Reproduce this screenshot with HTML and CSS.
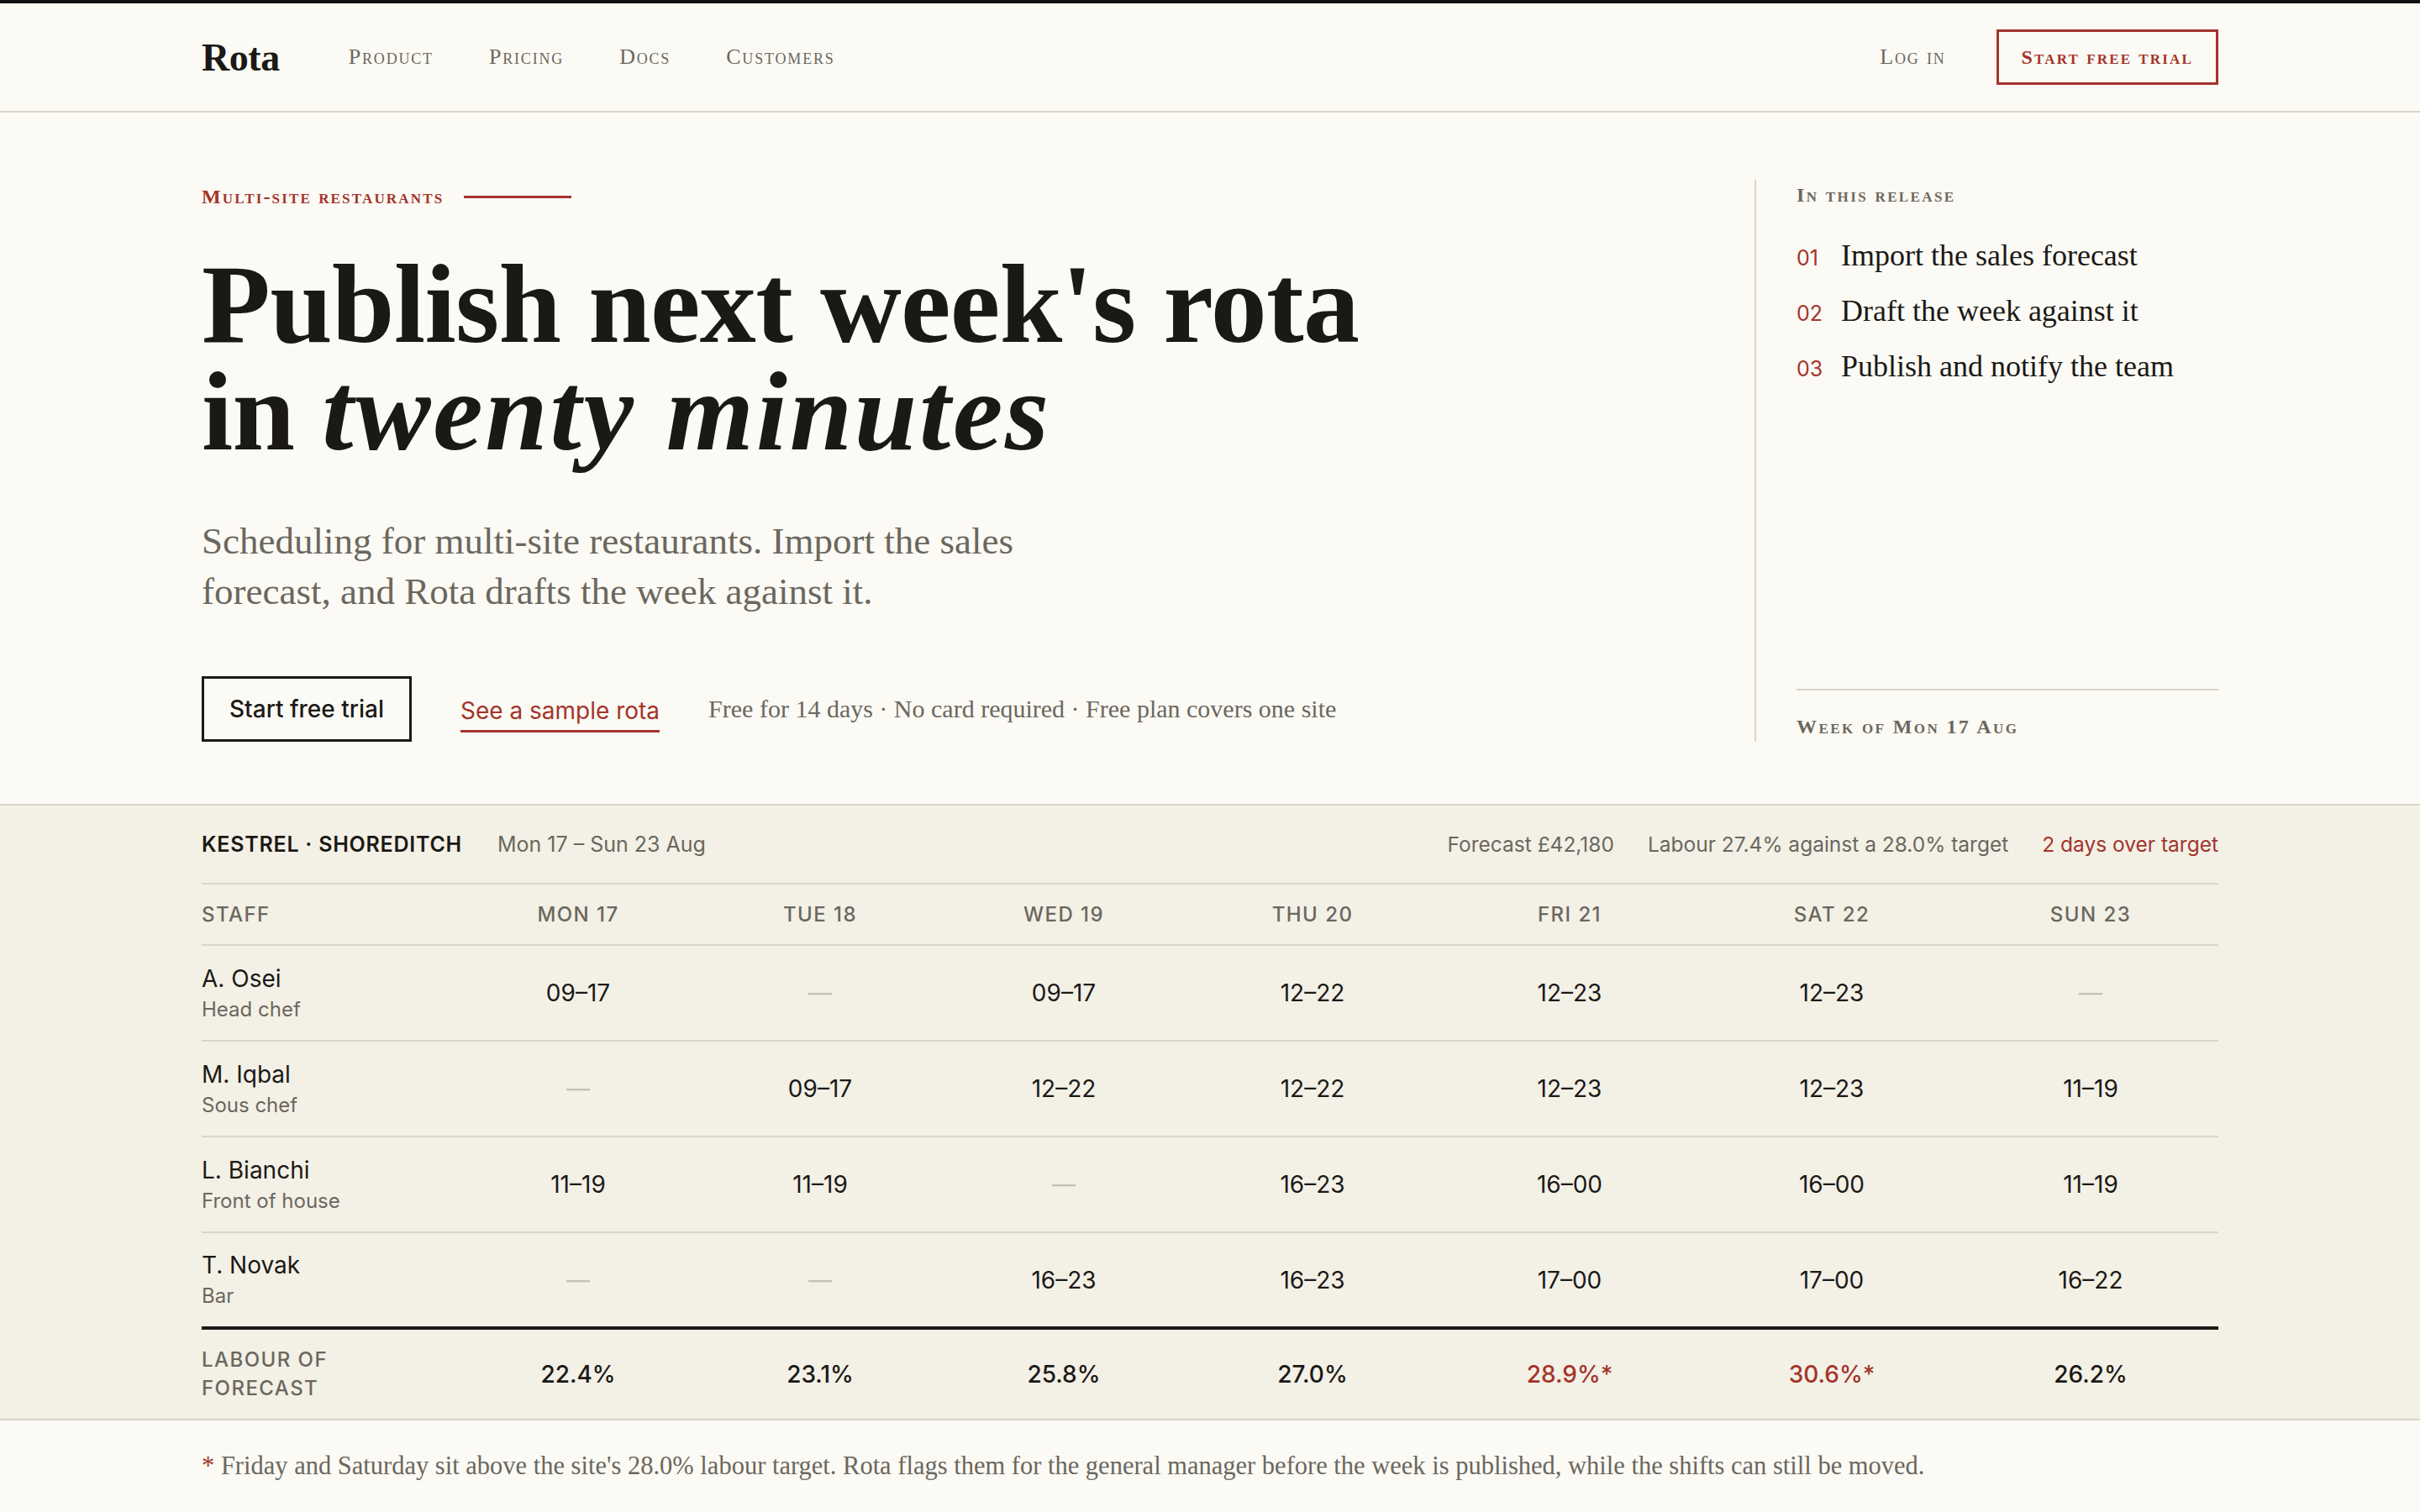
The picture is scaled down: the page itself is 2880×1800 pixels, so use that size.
FILE: index.html
```html
<!DOCTYPE html>
<html lang="en">
<head>
<meta charset="utf-8">
<title>Rota — Publish next week's rota in twenty minutes</title>
<link rel="stylesheet" href="styles.css">
</head>
<body>
<header class="nav">
  <div class="wrap nav-inner">
    <div class="nav-left">
      <a class="logo" href="#">Rota</a>
      <nav class="nav-links">
        <a href="#">Product</a>
        <a href="#">Pricing</a>
        <a href="#">Docs</a>
        <a href="#">Customers</a>
      </nav>
    </div>
    <div class="nav-right">
      <a class="login" href="#">Log in</a>
      <a class="nav-cta" href="#">Start free trial</a>
    </div>
  </div>
</header>

<section class="hero">
  <div class="wrap hero-grid">
    <div class="hero-main">
      <div class="eyebrow"><span>Multi-site restaurants</span><span class="eyebrow-rule"></span></div>
      <h1 class="headline"><span class="line">Publish next week's rota</span><span class="line">in <em>twenty minutes</em></span></h1>
      <p class="lede">Scheduling for multi-site restaurants. Import the sales forecast, and Rota drafts the week against it.</p>
      <div class="actions">
        <a class="btn" href="#">Start free trial</a>
        <a class="text-link" href="#">See a sample rota</a>
        <span class="meta">Free for 14 days · No card required · Free plan covers one site</span>
      </div>
    </div>
    <aside class="release">
      <div class="release-top">
        <div class="label">In this release</div>
        <ol class="steps">
          <li><span class="num">01</span><span>Import the sales forecast</span></li>
          <li><span class="num">02</span><span>Draft the week against it</span></li>
          <li><span class="num">03</span><span>Publish and notify the team</span></li>
        </ol>
      </div>
      <div class="release-foot label">Week of Mon 17 Aug</div>
    </aside>
  </div>
</section>

<section class="rota">
  <div class="wrap">
    <div class="rota-head">
      <div class="site">
        <span class="site-name">KESTREL · SHOREDITCH</span>
        <span class="muted">Mon 17 – Sun 23 Aug</span>
      </div>
      <div class="stats">
        <span class="muted">Forecast £42,180</span>
        <span class="muted">Labour 27.4% against a 28.0% target</span>
        <span class="alert">2 days over target</span>
      </div>
    </div>
    <table class="rota-table">
      <colgroup>
        <col class="c-staff"><col class="c-mon"><col class="c-tue"><col class="c-wed"><col class="c-thu"><col class="c-fri"><col class="c-sat"><col class="c-sun">
      </colgroup>
      <thead>
        <tr><th class="staff">Staff</th><th>Mon 17</th><th>Tue 18</th><th>Wed 19</th><th>Thu 20</th><th>Fri 21</th><th>Sat 22</th><th>Sun 23</th></tr>
      </thead>
      <tbody>
        <tr>
          <td class="staff"><div class="name">A. Osei</div><div class="role">Head chef</div></td>
          <td>09–17</td><td class="off">—</td><td>09–17</td><td>12–22</td><td>12–23</td><td>12–23</td><td class="off">—</td>
        </tr>
        <tr>
          <td class="staff"><div class="name">M. Iqbal</div><div class="role">Sous chef</div></td>
          <td class="off">—</td><td>09–17</td><td>12–22</td><td>12–22</td><td>12–23</td><td>12–23</td><td>11–19</td>
        </tr>
        <tr>
          <td class="staff"><div class="name">L. Bianchi</div><div class="role">Front of house</div></td>
          <td>11–19</td><td>11–19</td><td class="off">—</td><td>16–23</td><td>16–00</td><td>16–00</td><td>11–19</td>
        </tr>
        <tr>
          <td class="staff"><div class="name">T. Novak</div><div class="role">Bar</div></td>
          <td class="off">—</td><td class="off">—</td><td>16–23</td><td>16–23</td><td>17–00</td><td>17–00</td><td>16–22</td>
        </tr>
      </tbody>
      <tfoot>
        <tr>
          <th class="staff">Labour of<br>forecast</th>
          <td>22.4%</td><td>23.1%</td><td>25.8%</td><td>27.0%</td><td class="over">28.9%*</td><td class="over">30.6%*</td><td>26.2%</td>
        </tr>
      </tfoot>
    </table>
  </div>
</section>

<p class="wrap footnote"><span class="star">*</span> Friday and Saturday sit above the site's 28.0% labour target. Rota flags them for the general manager before the week is published, while the shifts can still be moved.</p>
</body>
</html>
```
FILE: styles.css
```css
:root {
  --bg: #fbfaf4;
  --panel: #f3f0e6;
  --line: #d9d5c9;
  --ink: #1b1916;
  --muted: #6b675e;
  --red: #a3342b;
  --dash: #c4c0b4;
  --serif: "Liberation Serif", "Times New Roman", serif;
  --sans: Inter, "Liberation Sans", Arial, sans-serif;
}

* { box-sizing: border-box; }

html, body {
  margin: 0;
  padding: 0;
}

body {
  background: var(--bg);
  color: var(--ink);
  font-family: var(--serif);
  border-top: 4px solid #111;
}

a { color: inherit; text-decoration: none; }

.wrap {
  width: 2400px;
  margin-left: auto;
  margin-right: auto;
}

/* NAV */
.nav {
  border-bottom: 2px solid var(--line);
}

.nav-inner {
  height: 128px;
  display: flex;
  align-items: center;
  justify-content: space-between;
}

.nav-left {
  display: flex;
  align-items: center;
  gap: 82px;
}

.logo {
  font-family: var(--serif);
  font-weight: 700;
  font-size: 46px;
  letter-spacing: -0.01em;
  color: var(--ink);
}

.nav-links {
  display: flex;
  gap: 66px;
}

.nav-links a,
.login {
  font-family: var(--serif);
  font-variant: small-caps;
  font-size: 26px;
  letter-spacing: 0.07em;
  color: var(--muted);
}

.nav-right {
  display: flex;
  align-items: center;
  gap: 60px;
}

.nav-cta {
  display: flex;
  align-items: center;
  height: 66px;
  padding: 0 27px;
  border: 3px solid var(--red);
  color: var(--red);
  font-family: var(--serif);
  font-variant: small-caps;
  font-weight: 700;
  font-size: 24px;
  letter-spacing: 0.09em;
}

/* HERO */
.hero {
  padding: 80px 0 74px;
  border-bottom: 2px solid var(--line);
}

.hero-grid {
  display: grid;
  grid-template-columns: 1fr 552px;
  column-gap: 80px;
}

.eyebrow {
  display: flex;
  align-items: center;
  gap: 24px;
  height: 40px;
  font-variant: small-caps;
  font-size: 24px;
  font-weight: 700;
  letter-spacing: 0.09em;
  color: var(--red);
}

.eyebrow-rule {
  width: 128px;
  height: 3px;
  background: var(--red);
}

.headline {
  margin: 44px 0 0;
  font-family: var(--serif);
  font-weight: 700;
  font-size: 134px;
  line-height: 128px;
  letter-spacing: -0.005em;
  color: var(--ink);
}

.headline .line {
  display: block;
  height: 128px;
}

.headline em {
  font-style: italic;
  letter-spacing: 0.02em;
}

.lede {
  margin: 60px 0 0;
  max-width: 1020px;
  font-size: 45px;
  line-height: 60px;
  color: var(--muted);
}

.actions {
  margin-top: 71px;
  display: flex;
  align-items: center;
  gap: 58px;
}

.btn {
  display: flex;
  align-items: center;
  height: 78px;
  padding: 0 30px;
  border: 3px solid var(--ink);
  font-family: var(--sans);
  font-size: 28px;
  font-weight: 500;
  color: var(--ink);
}

.text-link {
  font-family: var(--sans);
  font-size: 28px;
  color: var(--red);
  padding-top: 12px;
  padding-bottom: 6px;
  border-bottom: 3px solid var(--red);
}

.meta {
  font-size: 30px;
  color: var(--muted);
}

/* RELEASE SIDEBAR */
.release {
  border-left: 2px solid var(--line);
  padding-left: 48px;
  display: flex;
  flex-direction: column;
  justify-content: space-between;
}

.label {
  font-variant: small-caps;
  font-size: 24px;
  font-weight: 700;
  letter-spacing: 0.1em;
  line-height: 36px;
  color: var(--muted);
}

.steps {
  list-style: none;
  margin: 30px 0 0;
  padding: 0;
  display: flex;
  flex-direction: column;
  gap: 15px;
}

.steps li {
  display: flex;
  align-items: baseline;
  gap: 23px;
  font-size: 36px;
  line-height: 48px;
  color: var(--ink);
}

.num {
  font-family: var(--sans);
  font-size: 25px;
  color: var(--red);
  width: 30px;
}

.release-foot {
  border-top: 2px solid var(--line);
  padding-top: 25px;
}

/* ROTA TABLE */
.rota {
  background: var(--panel);
  border-bottom: 2px solid var(--line);
  font-family: var(--sans);
}

.rota-head {
  height: 94px;
  display: flex;
  align-items: center;
  justify-content: space-between;
  border-bottom: 2px solid var(--line);
  font-size: 25px;
}

.site, .stats {
  display: flex;
  align-items: center;
  gap: 42px;
}

.stats {
  font-size: 24.5px;
  gap: 40px;
}

.site-name {
  font-weight: 600;
  letter-spacing: 0.03em;
  color: var(--ink);
}

.muted { color: var(--muted); }
.alert { color: var(--red); }

.rota-table {
  width: 2400px;
  border-collapse: collapse;
  table-layout: fixed;
}

.c-staff { width: 304px; }
.c-mon { width: 288px; }
.c-tue { width: 288px; }
.c-wed { width: 292px; }
.c-thu { width: 300px; }
.c-fri { width: 312px; }
.c-sat { width: 312px; }
.c-sun { width: 304px; }

.rota-table th,
.rota-table td {
  padding: 0;
  text-align: center;
  vertical-align: middle;
}

.rota-table .staff { text-align: left; }

.rota-table thead th {
  height: 72px;
  border-bottom: 2px solid var(--line);
  font-size: 24px;
  font-weight: 500;
  letter-spacing: 0.06em;
  text-transform: uppercase;
  color: var(--muted);
}

.rota-table tbody td {
  height: 114px;
  border-bottom: 2px solid var(--line);
  font-size: 28px;
  color: var(--ink);
}

.rota-table tbody tr:last-child td {
  border-bottom: 4px solid var(--ink);
}

.rota-table td.off { color: var(--dash); }

.name {
  font-size: 28px;
  line-height: 36px;
  color: var(--ink);
}

.role {
  margin-top: 3px;
  font-size: 24px;
  line-height: 32px;
  color: var(--muted);
}

.rota-table tfoot th,
.rota-table tfoot td {
  height: 108px;
}

.rota-table tfoot th {
  font-size: 24px;
  font-weight: 500;
  line-height: 34px;
  letter-spacing: 0.06em;
  text-transform: uppercase;
  color: var(--muted);
}

.rota-table tfoot td {
  font-size: 28px;
  font-weight: 500;
  color: var(--ink);
}

.rota-table tfoot td.over { color: var(--red); }

/* FOOTNOTE */
.footnote {
  margin-top: 32px;
  margin-bottom: 0;
  font-size: 30.5px;
  line-height: 44px;
  color: var(--muted);
}

.star { color: var(--red); }
```
